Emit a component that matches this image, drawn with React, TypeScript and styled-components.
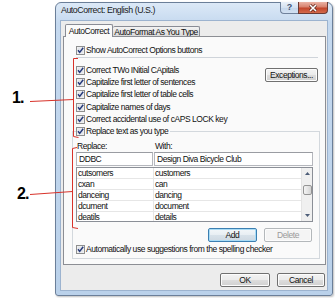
import React from "react";
import styled, { createGlobalStyle } from "styled-components";

const FONT = `"Liberation Sans", Arial, sans-serif`;

const GlobalStyle = createGlobalStyle`
  html, body { margin: 0; padding: 0; background: #fff; }
  body { font-family: ${FONT}; font-size: 8.5px; letter-spacing: -0.45px; color: #111; }
  * { box-sizing: border-box; }
`;

const Page = styled.div`
  position: relative;
  width: 335px;
  height: 298px;
  display: flex;
  align-items: flex-start;
  padding-top: 2px;
  background: #fff;
  overflow: hidden;
`;

const AnnotationColumn = styled.div`
  width: 55px;
  flex: none;
  display: flex;
  flex-direction: column;
`;

const Callout = styled.div<{ $top: number; $left: number }>`
  margin-top: ${(p) => p.$top}px;
  margin-left: ${(p) => p.$left}px;
  font: bold 16px ${FONT};
  letter-spacing: -1px;
  line-height: 14px;
  height: 14px;
  color: #000;
`;

const Overlay = styled.svg`
  position: absolute;
  left: 0;
  top: 0;
  pointer-events: none;
  z-index: 5;
`;

const Window = styled.div`
  width: 278px;
  height: 294px;
  flex: none;
  display: flex;
  flex-direction: column;
  border: 1px solid #6b7f99;
  border-radius: 6px 6px 3px 3px;
  background: linear-gradient(180deg, #dce9f7 0%, #c5d9ef 7%, #bad1ea 100%);
  padding: 0 4px 4px 4px;
  box-shadow: 1px 1px 2px rgba(0, 0, 0, 0.25);
`;

const TitleBar = styled.div`
  height: 17px;
  display: flex;
  justify-content: space-between;
  align-items: flex-start;
`;

const Title = styled.div`
  padding: 1px 0 0 1px;
  line-height: 12px;
  font-size: 8.8px;
  color: #1a1a1a;
`;

const CaptionButtons = styled.div`
  display: flex;
  margin-top: -1px;
`;

const HelpButton = styled.div`
  width: 18px;
  height: 12px;
  border: 1px solid #6f819b;
  border-right: none;
  border-top: none;
  border-radius: 0 0 0 4px;
  background: linear-gradient(180deg, #eaf1f9 0%, #d5e2f1 50%, #c3d5ea 51%, #d2e1f2 100%);
  color: #3e5372;
  font: bold 9px ${FONT};
  letter-spacing: 0;
  line-height: 11px;
  text-align: center;
`;

const CloseButton = styled.div`
  width: 30px;
  height: 12px;
  border: 1px solid #6a3b35;
  border-top: none;
  border-radius: 0 0 4px 0;
  background: linear-gradient(180deg, #eab3a5 0%, #d8826e 45%, #c2462c 55%, #d36a4c 100%);
  display: flex;
  align-items: center;
  justify-content: center;
`;

const Client = styled.div`
  flex: 1;
  display: flex;
  flex-direction: column;
  background: #ececec;
  border: 1px solid #9cb3cf;
  padding: 3px 1px 0 2px;
`;

const TabStrip = styled.div`
  height: 13px;
  display: flex;
  align-items: flex-end;
  padding-left: 2px;
  margin-bottom: -1px;
`;

const Tab = styled.div<{ $active?: boolean; $w: number }>`
  width: ${(p) => p.$w}px;
  height: ${(p) => (p.$active ? 13 : 10)}px;
  margin-bottom: ${(p) => (p.$active ? 0 : 1)}px;
  border: 1px solid #898c95;
  border-bottom: none;
  border-left: ${(p) => (p.$active ? "1px solid #898c95" : "none")};
  border-radius: 2px 2px 0 0;
  background: ${(p) =>
    p.$active ? "#fafafa" : "linear-gradient(180deg, #f3f3f3 0%, #e6e6e6 50%, #d9d9d9 100%)"};
  position: ${(p) => (p.$active ? "relative" : "static")};
  z-index: ${(p) => (p.$active ? 2 : "auto")};
  text-align: center;
  line-height: ${(p) => (p.$active ? 12 : 10)}px;
  white-space: nowrap;
`;

const TabPanel = styled.div`
  display: flex;
  flex-direction: column;
  background: #fafafa;
  border: 1px solid #8c8e94;
  padding: 7px 7px 5px 12px;
`;

const CheckRow = styled.div<{ $h?: number }>`
  height: ${(p) => p.$h ?? 12}px;
  display: flex;
  align-items: center;
  gap: 1px;
  white-space: nowrap;
  line-height: 11px;
`;

const CheckSvg = styled.svg`
  flex: none;
  display: block;
`;

const Separator = styled.div`
  height: 1px;
  margin-top: 1px;
  background: #cfd4da;
`;

const TopGrid = styled.div`
  display: grid;
  grid-template-columns: 1fr 53px;
  margin-top: 6px;
`;

const CheckList = styled.div`
  display: flex;
  flex-direction: column;
`;

const Button = styled.div<{ $w: number; $default?: boolean; $disabled?: boolean }>`
  width: ${(p) => p.$w}px;
  height: 14px;
  border: 1px solid ${(p) => (p.$default ? "#3c7fb1" : p.$disabled ? "#b4b8bb" : "#707070")};
  border-radius: 2px;
  background: ${(p) =>
    p.$disabled
      ? "#f4f4f4"
      : p.$default
      ? "linear-gradient(180deg, #f2f6f9 0%, #e8eef3 50%, #d8e2ea 51%, #cfd9e2 100%)"
      : "linear-gradient(180deg, #f3f3f3 0%, #ebebeb 50%, #dddddd 51%, #d0d0d0 100%)"};
  box-shadow: ${(p) => (p.$default ? "inset 0 0 0 1px #a9dcf6" : "inset 0 0 0 1px #fcfcfc")};
  color: ${(p) => (p.$disabled ? "#9a9a9a" : "#111")};
  text-align: center;
  line-height: 12px;
  white-space: nowrap;
`;

const ExceptionsButton = styled(Button)`
  margin-top: 4px;
`;

const GroupBox = styled.fieldset`
  margin: 0 -2px 0 -4px;
  padding: 0 6px 2px 3px;
  border: 1px solid #d3d8dd;
  min-width: 0;
`;

const Legend = styled.legend`
  padding: 0 2px 0 0;
  margin: 0;
`;

const FieldLabels = styled.div`
  display: grid;
  grid-template-columns: 78px 1fr;
  height: 12px;
  margin-top: 2px;
  line-height: 12px;
  padding-left: 1px;
`;

const FieldInputs = styled.div`
  display: grid;
  grid-template-columns: 77px 1fr;
  gap: 1px;
`;

const TextBox = styled.div`
  height: 14px;
  border: 1px solid #b5b7bd;
  border-top-color: #9a9ca2;
  background: #fff;
  padding: 0 2px;
  line-height: 12px;
  white-space: nowrap;
  overflow: hidden;
`;

const ListBox = styled.div`
  height: 55px;
  margin-top: 1px;
  border: 1px solid #8b8f97;
  background: #fff;
  display: flex;
  overflow: hidden;
`;

const ListRows = styled.div`
  flex: 1;
  display: flex;
  flex-direction: column;
`;

const ListRow = styled.div`
  display: grid;
  grid-template-columns: 77px 1fr;
  height: 11px;
  flex: none;
`;

const ListCell = styled.div<{ $first?: boolean }>`
  border-bottom: 1px solid #e6e6e6;
  border-right: ${(p) => (p.$first ? "1px solid #e6e6e6" : "none")};
  padding-left: 1px;
  line-height: 10px;
  white-space: nowrap;
  overflow: hidden;
`;

const ScrollBar = styled.div`
  width: 11px;
  flex: none;
  display: flex;
  flex-direction: column;
  align-items: center;
  background: #f0f0f0;
  border-left: 1px solid #e4e4e4;
`;

const ScrollArrow = styled.div`
  height: 11px;
  width: 100%;
  display: flex;
  align-items: center;
  justify-content: center;
`;

const Thumb = styled.div`
  width: 9px;
  height: 10px;
  margin-top: 6px;
  border: 1px solid #959595;
  border-radius: 2px;
  background: linear-gradient(90deg, #f4f4f4 0%, #e6e6e6 50%, #d4d4d4 100%);
`;

const ScrollSpacer = styled.div`
  flex: 1;
`;

const ButtonRow = styled.div`
  display: flex;
  justify-content: flex-end;
  gap: 7px;
  margin-top: 6px;
  padding-right: 1px;
`;

const AutoRow = styled.div`
  margin-top: 2px;
`;

const DialogButtons = styled.div`
  display: flex;
  justify-content: flex-end;
  gap: 7px;
  margin-top: 8px;
  padding-right: 1px;
`;

const CheckBox = () => (
  <CheckSvg width="9" height="9" viewBox="0 0 9 9">
    <rect x="0.5" y="0.5" width="8" height="8" fill="#f6f6f6" stroke="#8e8f8f" />
    <rect x="1.5" y="1.5" width="6" height="6" fill="#e3e6ea" />
    <path d="M2 4.3 L3.7 6.4 L7.2 1.8" fill="none" stroke="#26397a" strokeWidth="1.5" />
  </CheckSvg>
);

const Arrow = ({ up }: { up?: boolean }) => (
  <svg width="5" height="3" viewBox="0 0 5 3">
    <path d={up ? "M0 3 L2.5 0 L5 3 Z" : "M0 0 L2.5 3 L5 0 Z"} fill="#4d5d78" />
  </svg>
);

const options = [
  "Correct TWo INitial CApitals",
  "Capitalize first letter of sentences",
  "Capitalize first letter of table cells",
  "Capitalize names of days",
  "Correct accidental use of cAPS LOCK key",
];

const entries: [string, string][] = [
  ["cutsomers", "customers"],
  ["cxan", "can"],
  ["danceing", "dancing"],
  ["dcument", "document"],
  ["deatils", "details"],
];

export default function App() {
  return (
    <>
      <GlobalStyle />
      <Page>
        <AnnotationColumn>
          <Callout $top={89} $left={12}>1.</Callout>
          <Callout $top={82} $left={17}>2.</Callout>
        </AnnotationColumn>
        <Window>
          <TitleBar>
            <Title>AutoCorrect: English (U.S.)</Title>
            <CaptionButtons>
              <HelpButton>?</HelpButton>
              <CloseButton>
                <svg width="10" height="8" viewBox="0 0 10 8">
                  <path d="M2 1 L8 7 M8 1 L2 7" stroke="#5a231a" strokeWidth="3" />
                  <path d="M2 1 L8 7 M8 1 L2 7" stroke="#fff" strokeWidth="1.6" />
                </svg>
              </CloseButton>
            </CaptionButtons>
          </TitleBar>
          <Client>
            <TabStrip>
              <Tab $active $w={48}>AutoCorrect</Tab>
              <Tab $w={87}>AutoFormat As You Type</Tab>
            </TabStrip>
            <TabPanel>
              <CheckRow>
                <CheckBox />
                <span>Show AutoCorrect Options buttons</span>
              </CheckRow>
              <Separator />
              <TopGrid>
                <CheckList>
                  {options.map((o) => (
                    <CheckRow key={o} $h={12.3}>
                      <CheckBox />
                      <span>{o}</span>
                    </CheckRow>
                  ))}
                </CheckList>
                <ExceptionsButton $w={53}>Exceptions...</ExceptionsButton>
              </TopGrid>
              <GroupBox>
                <Legend>
                  <CheckRow $h={12.3}>
                    <CheckBox />
                    <span>Replace text as you type</span>
                  </CheckRow>
                </Legend>
                <FieldLabels>
                  <span>Replace:</span>
                  <span>With:</span>
                </FieldLabels>
                <FieldInputs>
                  <TextBox>DDBC</TextBox>
                  <TextBox>Design Diva Bicycle Club</TextBox>
                </FieldInputs>
                <ListBox>
                  <ListRows>
                    {entries.map(([a, b]) => (
                      <ListRow key={a}>
                        <ListCell $first>{a}</ListCell>
                        <ListCell>{b}</ListCell>
                      </ListRow>
                    ))}
                  </ListRows>
                  <ScrollBar>
                    <ScrollArrow>
                      <Arrow up />
                    </ScrollArrow>
                    <Thumb />
                    <ScrollSpacer />
                    <ScrollArrow>
                      <Arrow />
                    </ScrollArrow>
                  </ScrollBar>
                </ListBox>
                <ButtonRow>
                  <Button $w={49} $default>Add</Button>
                  <Button $w={48} $disabled>Delete</Button>
                </ButtonRow>
                <AutoRow>
                  <CheckRow>
                    <CheckBox />
                    <span>Automatically use suggestions from the spelling checker</span>
                  </CheckRow>
                </AutoRow>
              </GroupBox>
            </TabPanel>
            <DialogButtons>
              <Button $w={50}>OK</Button>
              <Button $w={48}>Cancel</Button>
            </DialogButtons>
          </Client>
        </Window>
        <Overlay width="335" height="298" viewBox="0 0 335 298">
          <g fill="none" stroke="#d8322a" strokeWidth="1">
            <polyline points="78,58.5 73.5,58.5 73.5,136.5 78.5,137.5" />
            <line x1="30" y1="101.5" x2="73.5" y2="99.5" />
            <polyline points="77,147.5 72.5,148.5 72.5,227.5 78,228.5" />
            <line x1="30" y1="194.5" x2="72.5" y2="191.5" />
          </g>
        </Overlay>
      </Page>
    </>
  );
}
